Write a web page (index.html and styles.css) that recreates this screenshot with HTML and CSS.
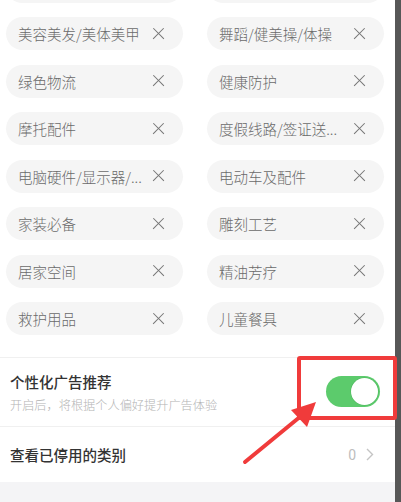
FILE: index.html
```html
<!DOCTYPE html>
<html lang="zh-CN">
<head>
  <meta charset="UTF-8" />
  <meta name="viewport" content="width=device-width, initial-scale=1.0"/>
  <title>广告偏好</title>
  <link rel="stylesheet" href="styles.css">
</head>
<body>
  <div class="page">
    <div class="main">
      <div class="tags">
        <div class="chip"><span class="chip-text"></span><span class="chip-x"></span></div>
        <div class="chip"><span class="chip-text"></span><span class="chip-x"></span></div>

        <div class="chip"><span class="chip-text">美容美发/美体美甲</span><span class="chip-x"></span></div>
        <div class="chip"><span class="chip-text">舞蹈/健美操/体操</span><span class="chip-x"></span></div>

        <div class="chip"><span class="chip-text">绿色物流</span><span class="chip-x"></span></div>
        <div class="chip"><span class="chip-text">健康防护</span><span class="chip-x"></span></div>

        <div class="chip"><span class="chip-text">摩托配件</span><span class="chip-x"></span></div>
        <div class="chip"><span class="chip-text">度假线路/签证送...</span><span class="chip-x"></span></div>

        <div class="chip"><span class="chip-text">电脑硬件/显示器/...</span><span class="chip-x"></span></div>
        <div class="chip"><span class="chip-text">电动车及配件</span><span class="chip-x"></span></div>

        <div class="chip"><span class="chip-text">家装必备</span><span class="chip-x"></span></div>
        <div class="chip"><span class="chip-text">雕刻工艺</span><span class="chip-x"></span></div>

        <div class="chip"><span class="chip-text">居家空间</span><span class="chip-x"></span></div>
        <div class="chip"><span class="chip-text">精油芳疗</span><span class="chip-x"></span></div>

        <div class="chip"><span class="chip-text">救护用品</span><span class="chip-x"></span></div>
        <div class="chip"><span class="chip-text">儿童餐具</span><span class="chip-x"></span></div>
      </div>

      <div class="setting">
        <div class="setting-text">
          <div class="setting-title">个性化广告推荐</div>
          <div class="setting-desc">开启后，将根据个人偏好提升广告体验</div>
        </div>
        <span class="switch"><span class="switch-knob"></span></span>
      </div>

      <div class="link-row">
        <span class="link-title">查看已停用的类别</span>
        <span class="link-count">0
          <svg class="chevron" width="8" height="13" viewBox="0 0 8 13"><path d="M1 1 L6.5 6.5 L1 12" fill="none" stroke="#c4c4c4" stroke-width="1.4"/></svg>
        </span>
      </div>

      <div class="footer-gap"></div>
    </div>
    <div class="scrollbar"></div>

    <!-- screenshot annotation -->
    <div class="mark-box"></div>
    <svg class="mark-arrow" width="401" height="502" viewBox="0 0 401 502">
      <line x1="245" y1="462" x2="301" y2="416" stroke="#f03b3b" stroke-width="4" stroke-linecap="round"/>
      <polygon points="291,410 316,402 307,427" fill="#f03b3b"/>
    </svg>
  </div>
</body>
</html>
```

FILE: styles.css
```css
body {
  margin: 0;
  font-family: "Noto Sans CJK SC", "Noto Sans", sans-serif;
  background: #fff;
  color: #333;
  overflow: hidden;
}

.page {
  position: relative;
  display: flex;
  height: 502px;
  overflow: hidden;
}

.main {
  width: 395px;
  display: flex;
  flex-direction: column;
}

.scrollbar {
  width: 6px;
  background: #575757;
}

.tags {
  display: grid;
  grid-template-columns: 177px 177px;
  column-gap: 24px;
  row-gap: 14.5px;
  margin-top: -30.5px;
  padding: 0 11px 22px 6px;
}

.chip {
  height: 33px;
  border-radius: 17px;
  background: #f5f5f5;
  display: flex;
  align-items: center;
  justify-content: space-between;
  padding: 0 19px 0 12px;
}

.chip-text {
  font-size: 14.5px;
  font-weight: 300;
  color: #6a6a6a;
  white-space: nowrap;
}

.chip-x {
  position: relative;
  width: 12px;
  height: 12px;
  flex-shrink: 0;
}

.chip-x::before,
.chip-x::after {
  content: "";
  position: absolute;
  left: -1.5px;
  top: 5.4px;
  width: 15px;
  height: 1.3px;
  background: #747474;
  transform: rotate(45deg);
}

.chip-x::after { transform: rotate(-45deg); }

.setting {
  border-top: 1px solid #f0f0f0;
  height: 69px;
  box-sizing: border-box;
  display: flex;
  align-items: center;
  justify-content: space-between;
  padding: 0 15px 0 10px;
}

.setting-title {
  font-size: 14.5px;
  font-weight: 500;
  line-height: 20px;
  color: #333;
}

.setting-desc {
  margin-top: 5px;
  font-size: 12.2px;
  font-weight: 300;
  line-height: 16px;
  color: #b4b4b4;
  white-space: nowrap;
}

.switch {
  width: 54px;
  height: 31px;
  border-radius: 16px;
  background: #5ccb6c;
  display: flex;
  align-items: center;
  justify-content: flex-end;
  padding-right: 2px;
  box-sizing: border-box;
  margin-top: -2px;
}

.switch-knob {
  width: 27px;
  height: 27px;
  border-radius: 50%;
  background: #fff;
  box-shadow: 0 0 0 0.5px #4fb65f;
}

.link-row {
  border-top: 1px solid #f0f0f0;
  height: 56px;
  box-sizing: border-box;
  display: flex;
  align-items: center;
  justify-content: space-between;
  padding: 0 21px 0 10px;
}

.link-title {
  font-size: 14.5px;
  font-weight: 500;
  color: #333;
}

.link-count {
  display: flex;
  align-items: center;
  gap: 10px;
  font-family: "Roboto", "Noto Sans", sans-serif;
  font-size: 14px;
  color: #bdbdbd;
}

.footer-gap {
  flex: 1;
  background: #f4f4f6;
}

.mark-box {
  position: absolute;
  left: 297px;
  top: 356px;
  width: 100px;
  height: 64px;
  box-sizing: border-box;
  border: 4.5px solid #f03b3b;
  border-radius: 3px;
}

.mark-arrow {
  position: absolute;
  left: 0;
  top: 0;
  pointer-events: none;
}
```
